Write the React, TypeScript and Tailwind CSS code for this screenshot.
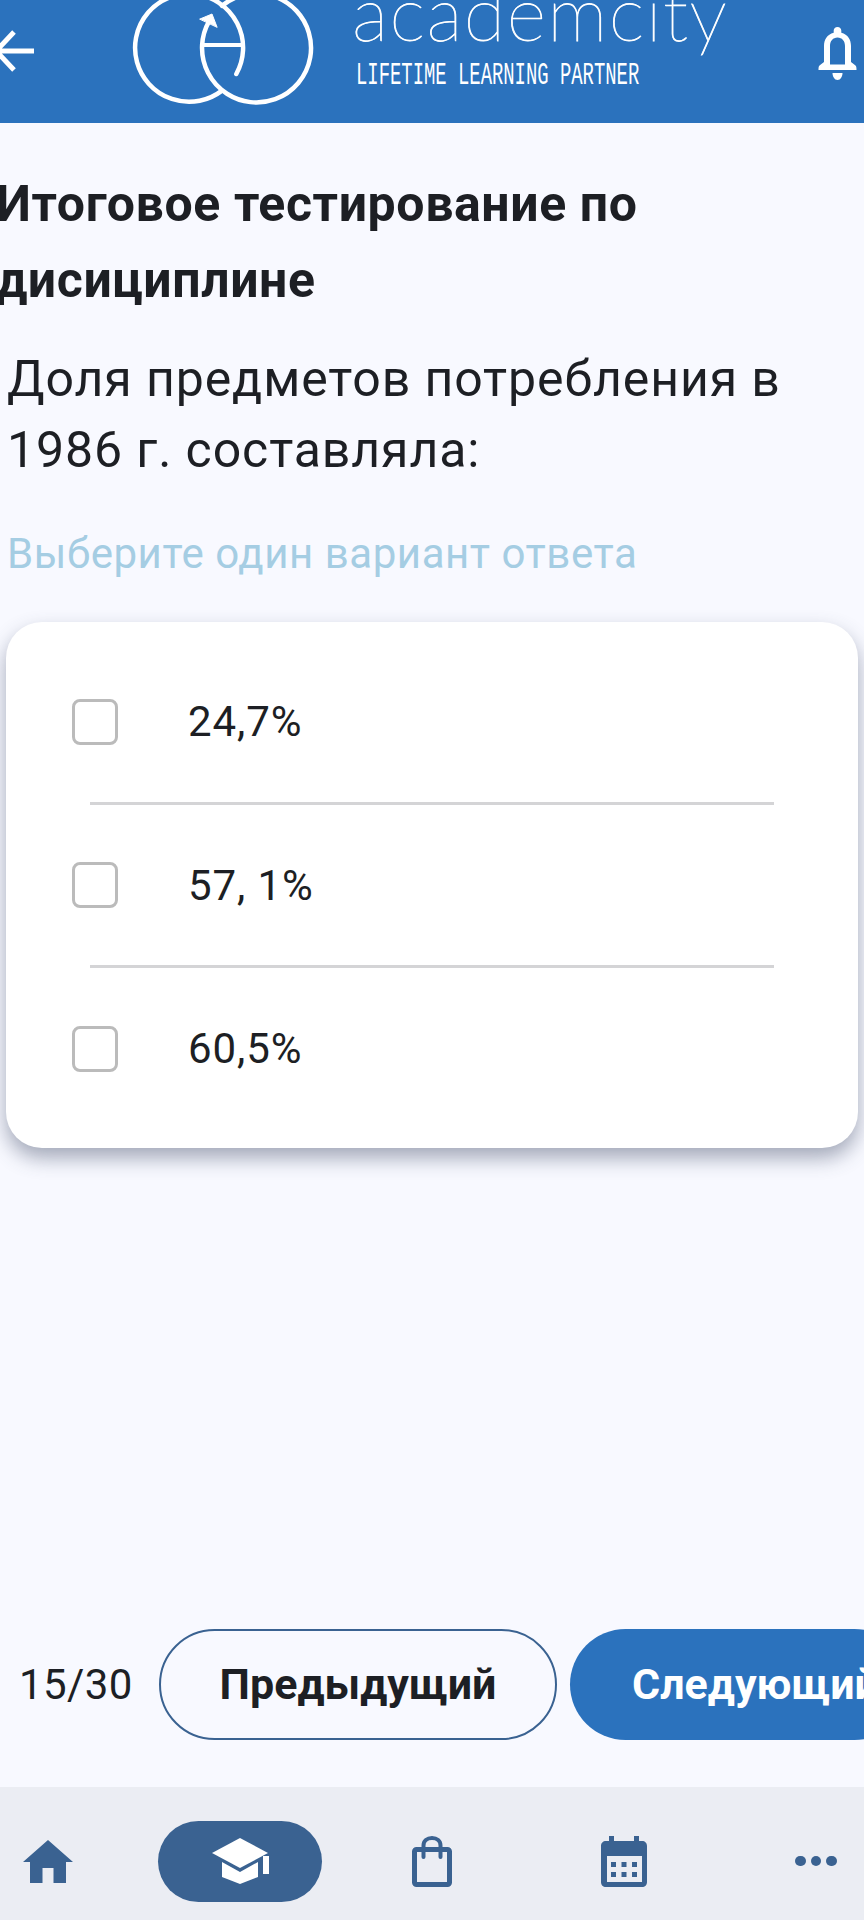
const options = ['24,7%', '57, 1%', '60,5%']

function Logo() {
  return (
    <svg width="200" height="123" viewBox="125 0 200 123" fill="none" stroke="white" strokeWidth="4.5" strokeLinecap="round" className="shrink-0">
      <path d="M236.300 74A54 54 0 1 0 222 90.600" />
      <path d="M209 21.300A54.500 54.500 0 1 0 222 5.800" />
      <path d="M203 45H241" strokeLinecap="butt" strokeWidth="4" />
      <path d="M200 19L212 14L217 27Z" fill="white" strokeWidth="1" strokeLinejoin="round" />
    </svg>
  )
}

function Bell() {
  return (
    <svg width="39" height="54" viewBox="0 0 38 54" fill="white">
      <path d="M19 0c2.200 0 3.800 1.600 3.800 3.600v2.200C29.500 7.500 32.500 12.800 32.500 19v16l4.500 3.500c.9.700 1 2.500 1 4.500H0c0-2 .1-3.800 1-4.500L5.500 35V19c0-6.200 3-11.500 9.700-13.200V3.600C15.200 1.600 16.800 0 19 0Zm0 10.500c-4.500 0-7.500 3.500-7.500 8.500v18.500h15V19c0-5-3-8.500-7.500-8.500Z" />
      <path d="M14 46h10c0 3.500-2 7-5 7s-5-3.500-5-7Z" />
    </svg>
  )
}

function NavIcons() {
  return (
    <div className="flex h-[133px] items-center bg-[#ebedf3] pt-[15px]">
      <svg width="50" height="43" viewBox="0 0 50 43" fill="#3a6291" className="ml-[23px] shrink-0">
        <path d="M25 0L50 22H43V43H30.500V28H19.500V43H7V22H0Z" />
      </svg>
      <div className="ml-[85px] flex h-[81px] w-[164px] shrink-0 items-center justify-center rounded-full bg-[#3a6291]">
        <svg width="57" height="46" viewBox="0 0 57 46" fill="white">
          <path d="M28 0L56 15L28 30L0 15Z" />
          <path d="M10 24L28 34L46 24V39L28 46L10 39Z" />
          <path d="M51 18H57V36H51Z" />
        </svg>
      </div>
      <svg width="40" height="51" viewBox="0 0 40 51" fill="none" stroke="#3a6291" strokeWidth="5" className="ml-[90px] shrink-0">
        <rect x="2.500" y="13.500" width="35" height="35" rx="2" />
        <path d="M11.500 21V9.500C11.500 5 15 2 20 2S28.500 5 28.500 9.500V21" strokeWidth="4" strokeLinecap="round" />
      </svg>
      <svg width="46" height="51" viewBox="0 0 46 51" fill="#3a6291" className="ml-[149px] shrink-0">
        <path d="M8 0H13V5H33V0H38V5H41C44 5 46 7 46 10V46C46 49 44 51 41 51H5C2 51 0 49 0 46V10C0 7 2 5 5 5H8Z" />
        <path d="M6 20H41V46H6Z" fill="#ebedf3" />
        <path d="M10 26H15V31H10ZM20.500 26H25.500V31H20.500ZM31 26H36V31H31ZM10 36H15V41H10ZM20.500 36H25.500V41H20.500ZM31 36H36V41H31Z" />
      </svg>
      <div className="ml-[148px] flex shrink-0 gap-[5px]">
        <div className="h-[10.500px] w-[10.500px] rounded-full bg-[#3a6291]" />
        <div className="h-[10.500px] w-[10.500px] rounded-full bg-[#3a6291]" />
        <div className="h-[10.500px] w-[10.500px] rounded-full bg-[#3a6291]" />
      </div>
    </div>
  )
}

export default function App() {
  return (
    <div className="flex h-[1920px] w-[864px] flex-col overflow-hidden bg-[#f8f9ff] font-['Roboto',sans-serif] text-[#1d1f24]">
      <header className="relative flex h-[123px] shrink-0 items-start overflow-hidden bg-[#2b72bd]">
        <svg width="36" height="44" viewBox="0 0 36 44" fill="none" stroke="white" strokeWidth="5" className="mt-[29px] shrink-0">
          <path d="M34 22H-4M14 3L-4 22L14 41" />
        </svg>
        <div className="ml-[89px]">
          <Logo />
        </div>
        <div className="ml-[27px] flex flex-col">
          <div className="mt-[-33px] font-['Lato',sans-serif] text-[76px] leading-[90px] font-thin tracking-[1.5px] whitespace-nowrap text-white [-webkit-text-stroke:0.8px_white]">
            academcity
          </div>
          <div className="mt-[5px] ml-[4px] origin-left scale-x-[0.59] font-['Liberation_Mono',monospace] text-[32px] leading-[28px] whitespace-nowrap text-white">
            LIFETIME LEARNING PARTNER
          </div>
        </div>
        <div className="absolute top-[27px] left-[818px]">
          <Bell />
        </div>
      </header>

      <h1 className="mt-[43px] ml-[-4px] text-[50px] leading-[76px] font-bold tracking-[0.6px] whitespace-nowrap">
        Итоговое тестирование по
        <br />
        дисициплине
      </h1>
      <p className="mt-[26px] ml-[7px] text-[50px] leading-[71px] tracking-[0.9px] whitespace-nowrap">
        Доля предметов потребления в
        <br />
        1986 г. составляла:
      </p>
      <p className="mt-[40px] ml-[7px] text-[42px] leading-[56px] tracking-[0.55px] text-[#a5cde3]">Выберите один вариант ответа</p>

      <div className="mt-[40px] ml-[6px] flex h-[526px] w-[852px] flex-col justify-center rounded-[36px] bg-white shadow-[0_10px_20px_rgba(60,70,100,0.45)]">
        {options.map((option, i) => (
          <div key={option}>
            {i > 0 && <div className="ml-[84px] h-[3px] w-[684px] bg-[#d4d4d6]" />}
            <div className="flex h-[160.500px] items-center pl-[66px]">
              <div className="h-[46px] w-[46px] rounded-[8px] border-[3px] border-[#bbbbbb]" />
              <span className="ml-[70px] text-[42px] tracking-[0.9px]">{option}</span>
            </div>
          </div>
        ))}
      </div>

      <div className="mt-auto flex h-[111px] items-center">
        <span className="ml-[19px] w-[140px] shrink-0 text-[42px] tracking-[0.4px]">15/30</span>
        <button className="h-[111px] w-[398px] shrink-0 rounded-[56px] border-[2px] border-[#3a6291] text-[43px] font-bold">
          Предыдущий
        </button>
        <button className="ml-[13px] h-[111px] w-[340px] shrink-0 rounded-[56px] bg-[#2b72bd] pr-[24px] pl-[62px] text-left text-[43px] font-bold whitespace-nowrap text-white">
          Следующий
        </button>
      </div>
      <div className="mt-[47px]">
        <NavIcons />
      </div>
    </div>
  )
}
